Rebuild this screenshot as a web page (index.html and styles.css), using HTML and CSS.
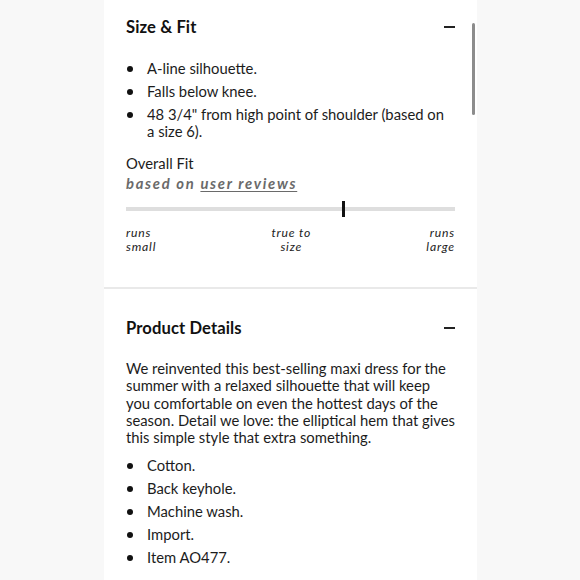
FILE: index.html
```html
<!DOCTYPE html>
<html>
<head>
<meta charset="utf-8">
<link rel="stylesheet" href="styles.css">
</head>
<body>
<div class="panel">
  <div class="scrollbar"></div>
  <section class="section fit">
    <div class="head">
      <h2>Size &amp; Fit</h2>
      <span class="minus"></span>
    </div>
    <ul class="bullets first">
      <li>A-line silhouette.</li>
      <li>Falls below knee.</li>
      <li>48 3/4" from high point of shoulder (based on a size 6).</li>
    </ul>
    <div class="overall">Overall Fit</div>
    <div class="based">based on <span class="link">user reviews</span></div>
    <div class="meter">
      <div class="track"></div>
      <div class="marker"></div>
    </div>
    <div class="labels">
      <span class="lab left">runs<br>small</span>
      <span class="lab mid">true to<br>size</span>
      <span class="lab right">runs<br>large</span>
    </div>
  </section>
  <div class="divider"></div>
  <section class="section details">
    <div class="head">
      <h2>Product Details</h2>
      <span class="minus"></span>
    </div>
    <p class="desc">We reinvented this best-selling maxi dress for the summer with a relaxed silhouette that will keep you comfortable on even the hottest days of the season. Detail we love: the elliptical hem that gives this simple style that extra something.</p>
    <ul class="bullets second">
      <li>Cotton.</li>
      <li>Back keyhole.</li>
      <li>Machine wash.</li>
      <li>Import.</li>
      <li>Item AO477.</li>
    </ul>
  </section>
</div>
</body>
</html>
```

FILE: styles.css
```css
* { box-sizing: border-box; }
html, body { margin: 0; padding: 0; }
body {
  background: #f8f8f8;
  font-family: Lato, "Noto Sans", sans-serif;
  color: #1c1c1c;
  height: 580px;
  overflow: hidden;
}
.panel {
  position: relative;
  width: 373px;
  margin: 0 0 0 104px;
  background: #ffffff;
  min-height: 580px;
}
.scrollbar {
  position: absolute;
  left: 368px;
  top: 23px;
  width: 3px;
  height: 92px;
  border-radius: 2px;
  background: #8c8c8c;
}
.section { padding: 0 22px; }
.fit { padding-top: 17px; padding-bottom: 33px; }
.details { padding-top: 29px; }
.head {
  display: flex;
  justify-content: space-between;
  align-items: center;
  height: 20px;
}
h2 {
  margin: 0;
  font-size: 16.6px;
  font-weight: 700;
  line-height: 20px;
  color: #111;
  letter-spacing: 0.1px;
}
.minus {
  width: 11px;
  height: 2px;
  background: #222;
}
.bullets {
  list-style: none;
  margin: 0;
  padding: 0;
  font-size: 14.8px;
  line-height: 17px;
}
.bullets li {
  position: relative;
  padding-left: 21px;
  margin-bottom: 6px;
}
.bullets li::before {
  content: "";
  position: absolute;
  left: 1px;
  top: 5.5px;
  width: 6px;
  height: 6px;
  border-radius: 50%;
  background: #111;
}
.bullets li:last-child { margin-bottom: 0; }
.first { margin-top: 23px; }
.overall {
  margin-top: 13px;
  font-size: 14.8px;
  line-height: 20px;
}
.based {
  margin-top: 0;
  font-size: 14.8px;
  line-height: 20px;
  font-weight: 700;
  font-style: italic;
  color: #6a6a6a;
  letter-spacing: 1.7px;
}
.link { text-decoration: underline; text-underline-offset: 2px; }
.meter {
  position: relative;
  margin-top: 8px;
  height: 16px;
  display: flex;
  align-items: center;
}
.track {
  width: 100%;
  height: 4px;
  background: #dedede;
}
.marker {
  position: absolute;
  left: 216px;
  top: 0;
  width: 3px;
  height: 16px;
  background: #111;
}
.labels {
  margin-top: 9px;
  display: flex;
  justify-content: space-between;
  font-size: 12.2px;
  line-height: 14px;
  font-style: italic;
  letter-spacing: 0.8px;
  color: #222;
}
.lab.mid { text-align: center; }
.lab.right { text-align: right; }
.divider {
  height: 2px;
  background: #e9e9e9;
}
.desc {
  margin: 22px 0 0 0;
  font-size: 14.8px;
  line-height: 17.3px;
}
.second { margin-top: 11px; }
```
